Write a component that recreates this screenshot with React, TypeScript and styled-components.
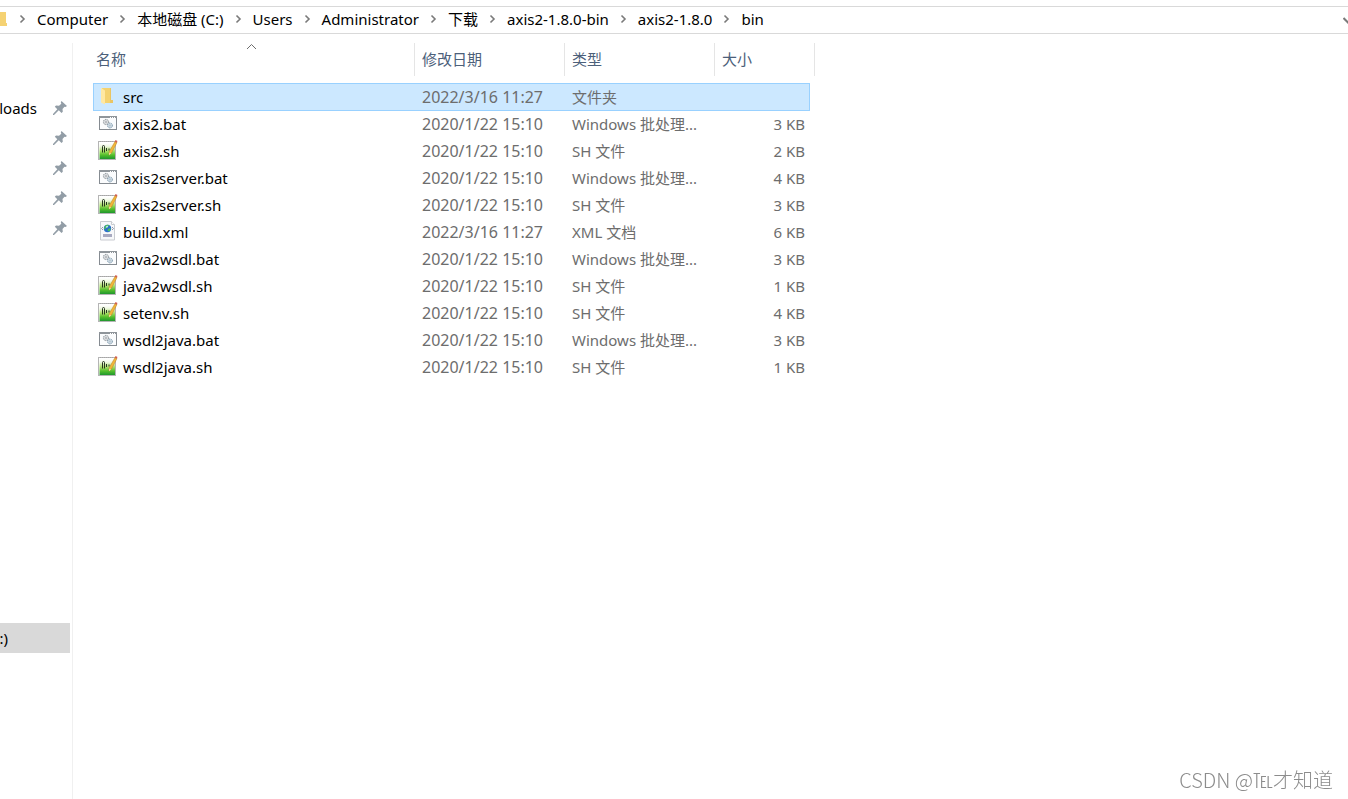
import React from "react";
import styled, { createGlobalStyle } from "styled-components";

const GlobalStyle = createGlobalStyle`
  * { box-sizing: border-box; }
  html, body, #root { height: 100%; }
  body {
    margin: 0;
    background: #fff;
    color: #000;
    font: 15px/20px "Noto Sans", "Noto Sans CJK SC", sans-serif;
    overflow: hidden;
  }
`;

const Window = styled.div`
  display: flex;
  flex-direction: column;
  height: 100%;
  padding-top: 6px;
`;

const AddressBar = styled.nav`
  display: flex;
  align-items: center;
  height: 28px;
  padding-bottom: 2px;
  border-top: 1px solid #d9d9d9;
  border-bottom: 1px solid #d9d9d9;
  overflow: hidden;
`;

const FolderEdge = styled.svg`
  flex: none;
  width: 7px;
  height: 16px;
  margin-right: 1px;
`;

const Crumbs = styled.ol`
  display: flex;
  flex: 1;
  margin: 0;
  padding: 0;
  list-style: none;
`;

const Crumb = styled.li`
  display: flex;
  align-items: center;
  white-space: nowrap;
`;

const CrumbLink = styled.a`
  color: #000;
  text-decoration: none;
`;

const Chevron = styled.svg`
  width: 7px;
  height: 10px;
  margin: 0 11px;
  fill: none;
  stroke: #7a7a7a;
  stroke-width: 1.6;
`;

const HistoryButton = styled.button`
  flex: none;
  width: 5px;
  height: 20px;
  padding: 0;
  border: 0;
  background: none;
  overflow: hidden;
`;

const Body = styled.div`
  display: flex;
  flex: 1;
  min-height: 0;
  padding-top: 9px;
`;

const Sidebar = styled.aside`
  flex: none;
  width: 73px;
  padding: 50px 2px 0 0;
  border-right: 1px solid #f0f0f0;
  overflow: hidden;
`;

const SideGroup = styled.div`
  margin-bottom: 380px;
`;

const SideItem = styled.a<{ $active?: boolean }>`
  display: flex;
  align-items: center;
  height: 30px;
  color: #000;
  text-decoration: none;
  background: ${(p) => (p.$active ? "#d9d9d9" : "transparent")};
`;

const SideLabel = styled.span<{ $width: number }>`
  display: flex;
  justify-content: flex-end;
  width: ${(p) => p.$width}px;
  overflow: hidden;
`;

const Pin = styled.svg`
  width: 14px;
  height: 14px;
  margin-left: auto;
  margin-right: 3px;
  fill: #929da6;
`;

const Main = styled.main`
  flex: 1;
  min-width: 0;
  padding-left: 20px;
`;

const Files = styled.table`
  display: block;
  border-spacing: 0;
`;

const Head = styled.thead`
  display: block;
  margin-bottom: 7px;
`;

const Rows = styled.tbody`
  display: block;
`;

const HeadRow = styled.tr`
  display: grid;
  grid-template-columns: 322px 150px 150px 100px;
  height: 33px;
`;

const HeadCell = styled.th<{ $first?: boolean }>`
  position: relative;
  display: flex;
  align-items: center;
  padding: 0 0 1px ${(p) => (p.$first ? 3 : 7)}px;
  border-right: 1px solid #e5e5e5;
  color: #4c607a;
  font-weight: 400;
`;

const SortMark = styled.svg`
  position: absolute;
  top: 0;
  left: 153px;
  width: 11px;
  height: 7px;
  fill: none;
  stroke: #6d6d6d;
`;

const Row = styled.tr<{ $selected?: boolean }>`
  display: grid;
  grid-template-columns: 322px 150px 150px 95px;
  width: 717px;
  height: ${(p) => (p.$selected ? 28 : 27)}px;
  background: ${(p) => (p.$selected ? "#cce8ff" : "transparent")};
  box-shadow: ${(p) => (p.$selected ? "inset 0 0 0 1px #99d1ff" : "none")};
`;

const Cell = styled.td<{ $right?: boolean }>`
  display: flex;
  align-items: center;
  justify-content: ${(p) => (p.$right ? "flex-end" : "flex-start")};
  padding: 0 ${(p) => (p.$right ? 5 : 0)}px 1px 7px;
  color: #6d6d6d;
  white-space: nowrap;
`;

const DateCell = styled(Cell)`
  font-size: 16px;
`;

const NameCell = styled(Cell)`
  gap: 5px;
  padding-left: 5px;
  color: #000;
`;

const FileIcon = styled.svg`
  flex: none;
  align-self: flex-start;
  width: 20px;
  height: 23px;
  margin-top: 2px;
`;

const Watermark = styled.div`
  position: fixed;
  right: 15px;
  bottom: 6px;
  color: #8c8c8c;
  font: 300 20px/26px "Noto Sans CJK SC", sans-serif;
`;

type Kind = "folder" | "bat" | "sh" | "xml";

const Icon = ({ kind }: { kind: Kind }) => {
  if (kind === "folder")
    return (
      <FileIcon viewBox="0 0 20 23" aria-hidden="true">
        <path d="M4 3h9v12h2v3H6z" fill="#f4d270" />
        <path d="M12 3h1v12h2v3h-3z" fill="#eac563" />
        <path d="M3 3l4 2.500v14L3 17.500z" fill="#ffe8a2" />
      </FileIcon>
    );
  if (kind === "bat")
    return (
      <FileIcon viewBox="0 0 20 23" aria-hidden="true">
        <rect x="1.5" y="3.5" width="17" height="13" fill="#fbfcfd" stroke="#858b91" />
        <path d="M1 4h18" stroke="#8f959a" strokeWidth="2" />
        <path d="M12 4.500h1m1 0h1m1 0h1" stroke="#fff" />
        <circle cx="8" cy="9" r="2.600" fill="#e9ecee" stroke="#7f868c" strokeDasharray="1.2 .6" />
        <circle cx="8" cy="9" r="1" fill="#fff" stroke="#8b9196" strokeWidth=".7" />
        <circle cx="12" cy="12.500" r="2.400" fill="#e1ebf2" stroke="#6f8ca2" strokeDasharray="1.2 .6" />
        <circle cx="12" cy="12.500" r=".8" fill="#fff" stroke="#7f98aa" strokeWidth=".6" />
      </FileIcon>
    );
  if (kind === "sh")
    return (
      <FileIcon viewBox="0 0 20 23" aria-hidden="true">
        <defs>
          <linearGradient id="shGreen" x1="0" y1="0" x2="0" y2="1">
            <stop offset="0" stopColor="#ffffff" />
            <stop offset=".2" stopColor="#f0f8e4" />
            <stop offset=".5" stopColor="#a9de68" />
            <stop offset=".75" stopColor="#55bf2c" />
            <stop offset="1" stopColor="#1f962e" />
          </linearGradient>
        </defs>
        <rect x=".5" y="1.5" width="17" height="18" fill="#fff" stroke="#b5b5b5" />
        <rect x="1.500" y="3" width="15.500" height="16" fill="url(#shGreen)" />
        <path d="M2 1.5h13" stroke="#a5a5a5" strokeDasharray="1 1" />
        <path d="M4.500 12.500V6.500q0-1 1-1t1 1V12.500M8.500 8v3m2.500-2.500v2" fill="none" stroke="#26351f" strokeWidth="1" />
        <path d="M17 1.500l2 1-5.500 10.500-2.500 2 .2-3.200z" fill="#f2b63a" stroke="#b98025" strokeWidth=".5" />
        <path d="M17.500 0l2 1-.8 1.800-2-1z" fill="#d0604f" />
        <path d="M11.200 12.500l1.800 1-2 1.800z" fill="#f4dcae" />
      </FileIcon>
    );
  return (
    <FileIcon viewBox="0 0 20 23" aria-hidden="true">
      <path d="M2.500.5h11l3 3v15.500h-14z" fill="#f7f8fa" stroke="#c9ccd1" />
      <path d="M13.500.5v3h3" fill="#fff" stroke="#c9ccd1" />
      <circle cx="9.500" cy="7.500" r="3.700" fill="#2b70c9" />
      <path d="M7 5q2-2 4-1l-1 2-2 .5-1 2-1-1zM10 8l2.500-1q.5 2-1.500 3.500l-1.500-1z" fill="#4cc05a" />
      <path d="M8 5.500l1.500-.8.5 1.300-1.500 1z" fill="#d4f1f5" />
      <path d="M5 6l-1.500 1.500L5 9m9-3l1.500 1.500L14 9" fill="none" stroke="#9099a8" />
      <path d="M5 13h9v3H5z" fill="#a7a9c0" />
    </FileIcon>
  );
};

const crumbs = ["Computer", "本地磁盘 (C:)", "Users", "Administrator", "下载", "axis2-1.8.0-bin", "axis2-1.8.0", "bin"];

const BUILT = "2020/1/22 15:10";
const EDITED = "2022/3/16 11:27";
const typeNames: Record<Kind, string> = {
  folder: "文件夹",
  bat: "Windows 批处理...",
  sh: "SH 文件",
  xml: "XML 文档",
};

const files: { name: string; kind: Kind; date: string; size: string }[] = [
  { name: "src", kind: "folder", date: EDITED, size: "" },
  { name: "axis2.bat", kind: "bat", date: BUILT, size: "3 KB" },
  { name: "axis2.sh", kind: "sh", date: BUILT, size: "2 KB" },
  { name: "axis2server.bat", kind: "bat", date: BUILT, size: "4 KB" },
  { name: "axis2server.sh", kind: "sh", date: BUILT, size: "3 KB" },
  { name: "build.xml", kind: "xml", date: EDITED, size: "6 KB" },
  { name: "java2wsdl.bat", kind: "bat", date: BUILT, size: "3 KB" },
  { name: "java2wsdl.sh", kind: "sh", date: BUILT, size: "1 KB" },
  { name: "setenv.sh", kind: "sh", date: BUILT, size: "4 KB" },
  { name: "wsdl2java.bat", kind: "bat", date: BUILT, size: "3 KB" },
  { name: "wsdl2java.sh", kind: "sh", date: BUILT, size: "1 KB" },
];

const pinned = ["loads", "", "", "", ""];

export default function App() {
  return (
    <Window>
      <GlobalStyle />
      <AddressBar>
        <FolderEdge viewBox="0 0 7 16" aria-hidden="true">
          <path d="M0 1h6v11h1v3H0z" fill="#f5d273" />
        </FolderEdge>
        <Crumbs>
          {crumbs.map((c) => (
            <Crumb key={c}>
              <Chevron viewBox="0 0 7 10" aria-hidden="true">
                <path d="M1.500 1.500L5 5 1.500 8.500" />
              </Chevron>
              <CrumbLink href="#">{c}</CrumbLink>
            </Crumb>
          ))}
        </Crumbs>
        <HistoryButton aria-label="History">
          <svg width="10" height="20" viewBox="0 0 10 20" fill="none" stroke="#7a7a7a" strokeWidth="2">
            <path d="M.5 9l4.500 4.500L9.500 9" />
          </svg>
        </HistoryButton>
      </AddressBar>
      <Body>
        <Sidebar>
          <SideGroup>
            {pinned.map((label, i) => (
              <SideItem key={i} href="#">
                <SideLabel $width={37}>{label}</SideLabel>
                <Pin viewBox="0 0 14 14" aria-hidden="true">
                  <path d="M8.500 0L14 5l-1.500 1-1-.3-2 2.300.3 2.700L8.500 12 5.800 9.200 1 14H0v-1l4.300-4.800L1.800 5.700 3 4.500l3 .2 2.300-2-.5-1.500z" />
                </Pin>
              </SideItem>
            ))}
          </SideGroup>
          <SideItem href="#" $active>
            <SideLabel $width={8}>:)</SideLabel>
          </SideItem>
        </Sidebar>
        <Main>
          <Files>
            <Head>
              <HeadRow>
                <HeadCell $first scope="col">
                  名称
                  <SortMark viewBox="0 0 11 7" aria-hidden="true">
                    <path d="M1 6l4.500-4.500L10 6" />
                  </SortMark>
                </HeadCell>
                <HeadCell scope="col">修改日期</HeadCell>
                <HeadCell scope="col">类型</HeadCell>
                <HeadCell scope="col">大小</HeadCell>
              </HeadRow>
            </Head>
            <Rows>
              {files.map((f, i) => (
                <Row key={f.name} $selected={i === 0}>
                  <NameCell>
                    <Icon kind={f.kind} />
                    {f.name}
                  </NameCell>
                  <DateCell>{f.date}</DateCell>
                  <Cell>{typeNames[f.kind]}</Cell>
                  <Cell $right>{f.size}</Cell>
                </Row>
              ))}
            </Rows>
          </Files>
        </Main>
      </Body>
      <Watermark>CSDN @℡才知道</Watermark>
    </Window>
  );
}
